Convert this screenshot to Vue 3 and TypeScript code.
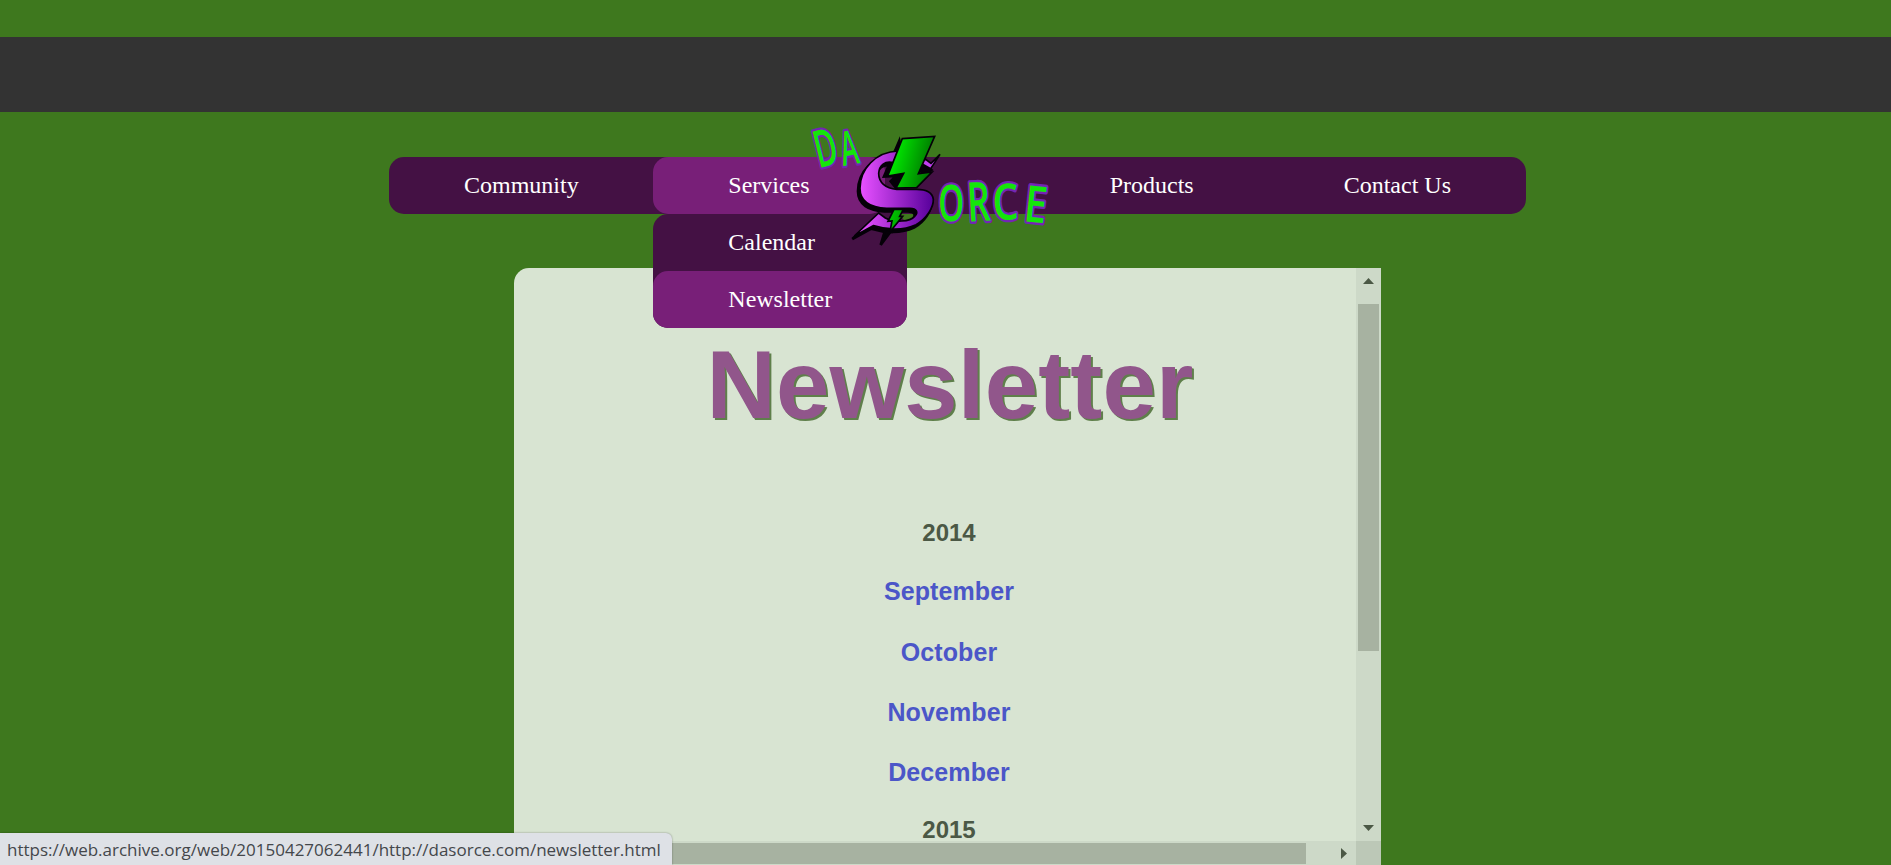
<script setup lang="ts">
interface LogoLetter { ch: string; x: number; y: number; size: number; rot: number; sx: number }

const months: string[] = ['September', 'October', 'November', 'December']
const services: string[] = ['Calendar', 'Newsletter']
const letters: LogoLetter[] = [
  { ch: 'D', x: 86, y: 175, size: 155, rot: -14, sx: 0.6 },
  { ch: 'A', x: 160, y: 168, size: 142, rot: -10, sx: 0.56 },
  { ch: 'O', x: 445, y: 332, size: 150, rot: 0, sx: 0.66 },
  { ch: 'R', x: 534, y: 335, size: 164, rot: -3, sx: 0.66 },
  { ch: 'C', x: 609, y: 330, size: 150, rot: -2, sx: 0.82 },
  { ch: 'E', x: 698, y: 333, size: 152, rot: 6, sx: 0.8 },
]
const emblem =
  'M325 123C255 125 210 180 210 235C210 275 243 293 290 295L360 295C380 295 386 308 374 319' +
  'C360 335 315 339 286 324L266 309L193 378L250 347C290 360 340 362 378 344C410 326 431 292 430 268' +
  'C427 245 408 238 380 238L320 238C286 236 266 217 266 190C268 165 285 152 310 158Z'
const statusUrl = 'https://web.archive.org/web/20150427062441/http://dasorce.com/newsletter.html'
</script>

<template>
  <div class="page">
    <div class="banner"></div>
    <nav class="menu">
      <a class="item">Community</a>
      <div class="item active">
        Services
        <div class="submenu">
          <a v-for="(s, i) in services" :key="s" class="item" :class="{ active: i === 1 }">{{ s }}</a>
        </div>
      </div>
      <div class="gap">
        <svg class="logo" viewBox="0 0 810 420" width="270" height="140">
          <defs>
            <linearGradient id="violet" gradientUnits="userSpaceOnUse" x1="215" y1="0" x2="430" y2="0">
              <stop offset="0" stop-color="#e650ff" />
              <stop offset="1" stop-color="#56009a" />
            </linearGradient>
            <linearGradient id="green" gradientUnits="userSpaceOnUse" x1="320" y1="120" x2="420" y2="145">
              <stop offset="0" stop-color="#00e400" />
              <stop offset="1" stop-color="#007c00" />
            </linearGradient>
          </defs>
          <g class="letters">
            <text v-for="l in letters" :key="l.ch" :font-size="l.size"
              :transform="`translate(${l.x} ${l.y}) rotate(${l.rot}) scale(${l.sx} 1)`">{{ l.ch }}</text>
          </g>
          <path class="shade" transform="translate(-6 9)" :d="emblem" />
          <path class="shade" d="M328 92L282 200L318 198L302 214L320 236L348 190ZM378 165L395 152L424 180L400 192ZM258 346L285 362L272 405L304 362Z" />
          <path class="edge violet" :d="emblem" />
          <path class="edge tip" d="M390 158L407 148L423 160L450 133L422 176Z" />
          <path class="edge green" d="M337 86L434 79L385 191L426 186L380 233L318 234L341 190L293 198Z" />
          <path class="edge green" d="M312 298L340 298L329 319L338 319L300 365L306 333L294 334Z" />
        </svg>
      </div>
      <a class="item">Products</a>
      <a class="item">Contact Us</a>
    </nav>
    <main class="panel">
      <section class="content">
        <h1>Newsletter</h1>
        <p class="year">2014</p>
        <a v-for="m in months" :key="m" class="month">{{ m }}</a>
        <p class="year last">2015</p>
      </section>
      <div class="vbar">
        <svg width="11" height="6" viewBox="0 0 11 6"><path d="M0 6L5.5 0L11 6Z" /></svg>
        <i class="vthumb"></i>
        <svg class="down" width="11" height="6" viewBox="0 0 11 6"><path d="M0 0H11L5.5 6Z" /></svg>
      </div>
      <div class="hbar">
        <i class="hthumb"></i>
        <svg width="6" height="11" viewBox="0 0 6 11"><path d="M0 0L6 5.5L0 11Z" /></svg>
      </div>
      <div class="corner"></div>
    </main>
    <div class="status"><span>{{ statusUrl }}</span></div>
  </div>
</template>

<style>
html, body { margin: 0; overflow: hidden; }
</style>

<style scoped>
.page { position: relative; height: 865px; overflow: hidden; padding-top: 37px; box-sizing: border-box; background: #3e781e; }
.banner { height: 75px; background: #333; }
.menu { display: flex; width: 1137px; height: 57px; margin: 45px 0 0 389px; border-radius: 15px; background: #441144; font: 24px/57px "Liberation Serif", serif; color: #fff; position: relative; z-index: 2; }
.item { display: block; padding: 0 75px; border-radius: 15px; position: relative; white-space: nowrap; }
.menu > .item:first-child { margin-right: -0.4px; }
.active { background: #781f78; }
.submenu { position: absolute; top: 57px; left: 0; border-radius: 15px; background: #441144; }
.gap { flex: 1; position: relative; }
.logo { position: absolute; left: -95px; top: -47px; overflow: visible; }
.letters { font-family: "Open Sans", sans-serif; font-weight: 600; fill: #14e60a; stroke: #7425b4; stroke-width: 14px; stroke-linejoin: round; paint-order: stroke; }
.shade { fill: #050008; stroke: #050008; stroke-width: 8px; }
.edge { stroke: #050008; stroke-width: 5px; }
.violet { fill: url(#violet); }
.tip { fill: #c13ff0; }
.green { fill: url(#green); }
.panel { display: grid; grid-template: 573px 24px / 842px 25px; width: 867px; margin: 54px 0 0 514px; border-radius: 15px 0 0 0; overflow: hidden; background: #d8e4d2; font-family: "Liberation Sans", sans-serif; font-weight: bold; }
.content { overflow: hidden; width: 842px; display: flex; flex-direction: column; text-align: center; }
.content > * { width: 870px; flex-shrink: 0; }
h1 { margin: 62px 0 0; font-size: 96px; line-height: 110px; letter-spacing: 0.15px; text-indent: 2px; color: #91568b; text-shadow: 2px 2px #5f7f4b; }
.year { margin: 79px 0 0; font-size: 24px; line-height: 28px; color: #4b5845; }
.month { font-size: 25px; line-height: 60px; letter-spacing: 0.1px; color: #4b56c8; }
.year + .month { margin-top: 14px; }
.month + .month { position: relative; top: 1px; }
.last { margin-top: 15px; }
.vbar { display: flex; flex-direction: column; align-items: center; background: #cdd9c8; fill: #4b5845; padding: 10px 0; box-sizing: border-box; }
.vthumb { width: 21px; height: 347px; margin-top: 20px; background: #a7b2a1; }
.down { margin-top: auto; }
.hbar { display: flex; align-items: center; background: #cdd9c8; fill: #4b5845; }
.hthumb { width: 792px; height: 21px; margin: 1px 35px 0 0; background: #a7b2a1; }
.corner { background: #bcc8b7; }
.status { position: absolute; z-index: 3; left: 0; bottom: 0; width: 672px; height: 32px; padding-left: 7px; box-sizing: border-box; border-radius: 0 6px 0 0; background: #dee1e6; box-shadow: 0 0 2px rgba(0,0,0,.4); color: #44474b; font: 17px/33px "Open Sans", sans-serif; white-space: nowrap; }
</style>
